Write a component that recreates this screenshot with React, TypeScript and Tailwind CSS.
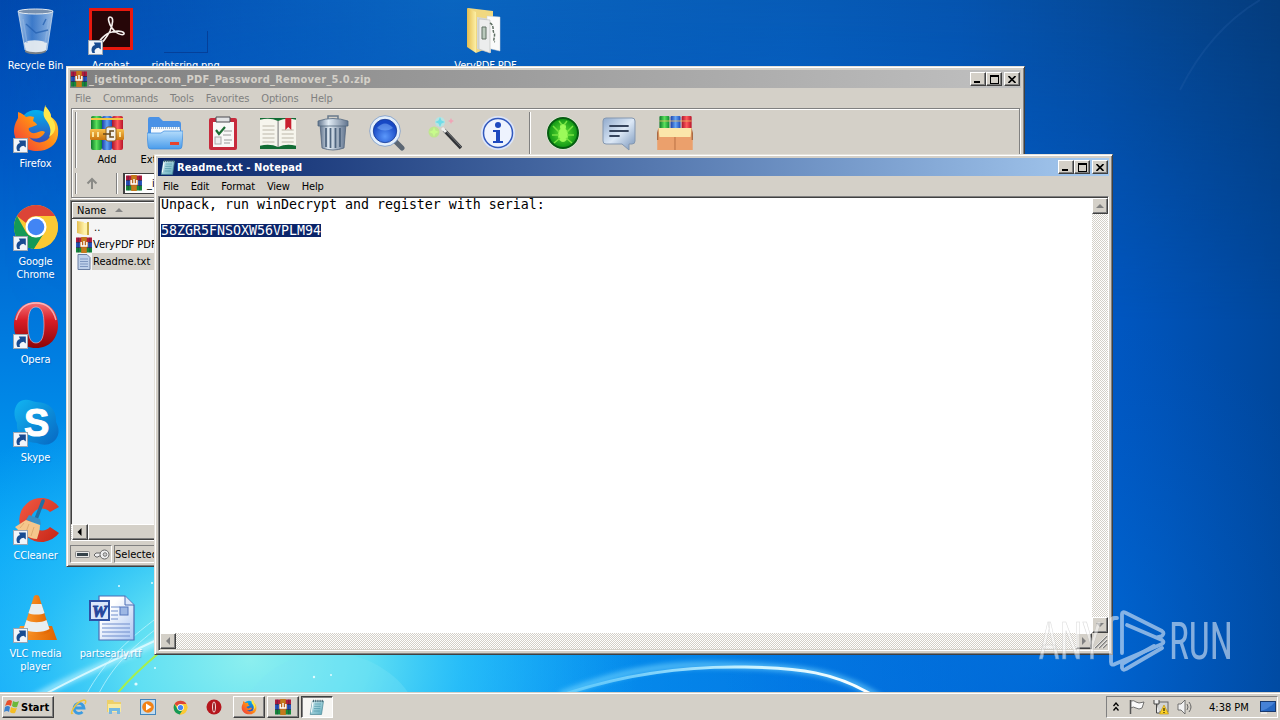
import type { ReactNode } from "react";
import clsx from "clsx";

const ui = "font-['DejaVu_Sans_Condensed','DejaVu_Sans',sans-serif] [font-stretch:condensed]";
const raised =
  "bg-[#d4d0c8] border border-t-white border-l-white border-r-[#404040] border-b-[#404040] shadow-[inset_-1px_-1px_0_#808080]";
const sunken = "border border-t-[#808080] border-l-[#808080] border-r-white border-b-white";
const dither = "bg-[conic-gradient(#fff_25%,#d4d0c8_0_50%,#fff_0_75%,#d4d0c8_0)] bg-[size:2px_2px]";

type IconProps = { className?: string };

// Gradients shared by every icon on the page
function Gradients() {
  return (
    <svg className="absolute size-0" aria-hidden>
      <defs>
        <linearGradient id="red" x1="0" x2="1"><stop offset="0" stopColor="#a8142c" /><stop offset=".5" stopColor="#ff5a5c" /><stop offset="1" stopColor="#b8142a" /></linearGradient>
        <linearGradient id="green" x1="0" x2="1"><stop offset="0" stopColor="#0e7a2a" /><stop offset=".5" stopColor="#5be05c" /><stop offset="1" stopColor="#0d8a30" /></linearGradient>
        <linearGradient id="blue" x1="0" x2="1"><stop offset="0" stopColor="#1c3fa8" /><stop offset=".5" stopColor="#63a4f4" /><stop offset="1" stopColor="#1d4ab8" /></linearGradient>
        <linearGradient id="belt" x1="0" x2="0" y1="0" y2="1"><stop offset="0" stopColor="#f8c04c" /><stop offset="1" stopColor="#c9740e" /></linearGradient>
        <linearGradient id="folderBlue" x1="0" x2="0" y1="0" y2="1"><stop offset="0" stopColor="#b4dcfb" /><stop offset="1" stopColor="#4a9ceb" /></linearGradient>
        <linearGradient id="metal" x1="0" x2="1"><stop offset="0" stopColor="#60738c" /><stop offset=".35" stopColor="#e3edf6" /><stop offset="1" stopColor="#62758f" /></linearGradient>
        <radialGradient id="lens" cx=".5" cy=".7"><stop offset="0" stopColor="#5b98fb" /><stop offset="1" stopColor="#1748c4" /></radialGradient>
        <radialGradient id="bug"><stop offset="0" stopColor="#66e336" /><stop offset="1" stopColor="#0d9414" /></radialGradient>
        <linearGradient id="bubble" x1="0" x2="1" y1="0" y2="1"><stop offset="0" stopColor="#8fa9cc" /><stop offset=".5" stopColor="#dce8f6" /><stop offset="1" stopColor="#7592b8" /></linearGradient>
        <linearGradient id="fox" x1="0" x2="1" y1="1" y2="0"><stop offset="0" stopColor="#f02d42" /><stop offset=".5" stopColor="#ff8b16" /><stop offset="1" stopColor="#ffe63a" /></linearGradient>
        <linearGradient id="foxGlobe" x1="0" x2="0" y1="0" y2="1"><stop offset="0" stopColor="#00b2f0" /><stop offset="1" stopColor="#3846b8" /></linearGradient>
        <linearGradient id="operaRed" x1="0" x2="0" y1="0" y2="1"><stop offset="0" stopColor="#f7757b" /><stop offset=".4" stopColor="#d81d26" /><stop offset="1" stopColor="#8b0508" /></linearGradient>
        <linearGradient id="skype" x1="0" x2="1" y1="0" y2="1"><stop offset="0" stopColor="#11b5f2" /><stop offset="1" stopColor="#0767c2" /></linearGradient>
        <linearGradient id="cc" x1="0" x2="1" y1="0" y2="1"><stop offset="0" stopColor="#f25a43" /><stop offset="1" stopColor="#c62517" /></linearGradient>
        <linearGradient id="glass" x1="0" x2="1"><stop offset="0" stopColor="#d8e9f8" stopOpacity=".75" /><stop offset=".4" stopColor="#6c9edc" stopOpacity=".55" /><stop offset="1" stopColor="#dcebf8" stopOpacity=".7" /></linearGradient>
        <linearGradient id="yellow" x1="0" x2="1"><stop offset="0" stopColor="#e5bd4f" /><stop offset="1" stopColor="#fdf0a6" /></linearGradient>
        <linearGradient id="cone" x1="0" x2="1"><stop offset="0" stopColor="#ff9d2e" /><stop offset="1" stopColor="#e06400" /></linearGradient>
        <linearGradient id="paper" x1="0" x2="1" y1="0" y2="1"><stop offset=".3" stopColor="#fff" /><stop offset="1" stopColor="#a9c4f2" /></linearGradient>
        <linearGradient id="pad" x1="0" x2="1" y1="0" y2="1"><stop offset="0" stopColor="#d8f2f6" /><stop offset="1" stopColor="#5ba7b8" /></linearGradient>
      </defs>
    </svg>
  );
}

function RarIcon({ className }: IconProps) {
  return (
    <svg viewBox="0 0 16 16" className={clsx("shrink-0", className)}>
      <rect width="16" height="5" y=".5" fill="#b21c3c" />
      <rect width="16" height="5" y="5.5" fill="#2a56c0" />
      <rect width="16" height="5" y="10.5" fill="#178a3a" />
      <path d="M0 5.5h16M0 10.5h16" stroke="#1c2350" strokeWidth=".7" />
      <path d="M2.2.5v15M13.8.5v15" stroke="#181a50" strokeWidth=".7" opacity=".6" />
      <rect x="5.2" width="5.6" height="16" fill="#c4791c" />
      <rect x="4" y="4.5" width="8" height="6" rx="1" fill="#b9661e" />
      <path d="M5.2 5v4h5.6V5M8 4v5" fill="none" stroke="#fff" strokeWidth="1.4" />
    </svg>
  );
}

function NotepadIcon({ className }: IconProps) {
  return (
    <svg viewBox="0 0 16 16" className={clsx("shrink-0", className)}>
      <path d="M3.5 2h11l-2 13.5H1.2z" fill="url(#pad)" stroke="#4a8795" strokeWidth=".7" />
      <path d="M4 2.5 2.3 13.5" stroke="#fff" strokeWidth="1" />
      <path d="M5.5 5h6.5M5.2 7.3h6.4M4.9 9.6h6.4M4.6 12h6.2" stroke="#549aab" strokeWidth=".8" />
      <path d="M4.5.8v2.4M6.7.8v2.4M8.9.8v2.4M11.1.8v2.4M13.3.8v2.4" stroke="#3f5a66" strokeWidth=".9" />
    </svg>
  );
}

function FirefoxIcon({ className }: IconProps) {
  return (
    <svg viewBox="0 0 48 48" className={className}>
      <circle cx="24" cy="22" r="17" fill="url(#foxGlobe)" />
      <path d="M33 1c4 5 6 8 6 11 6 4 8 9 7 18-1 10-10 16-21 16S3 39 2 27c0-7 2-10 4-14V7c4 1 6 3 8 5 3-1 5-1 8 0l-1 4c3 2 4 3 4 4l-8 3c-1 2 1 4 3 5 6 1 9-4 13-1-3 7-11 8-16 5 5 7 15 7 20 1 5-7 3-14-2-19-3-4-3-8-1-14z" fill="url(#fox)" />
      <path d="M33 1c-2 7-2 10 1 14 4 5 6 11 3 17 8-5 8-12 2-20 0-3-1-6-6-11z" fill="#ffe74a" />
    </svg>
  );
}

function ChromeIcon({ className }: IconProps) {
  return (
    <svg viewBox="0 0 48 48" className={className}>
      <circle cx="24" cy="24" r="22" fill="#fbc934" />
      <path d="M5 13A22 22 0 0 1 43 13H24a11 11 0 0 0-10 7z" fill="#dc4437" />
      <path d="M5 13a22 22 0 0 0 17 33l10-16a11 11 0 0 1-18-1z" fill="#149957" />
      <path d="M43 13H24a11 11 0 0 1 9 17L22 46a22 22 0 0 0 21-33z" fill="#fbc934" />
      <circle cx="24" cy="24" r="10.5" fill="#fff" />
      <circle cx="24" cy="24" r="8.3" fill="#4285f4" />
    </svg>
  );
}

function OperaIcon({ className }: IconProps) {
  return (
    <svg viewBox="0 0 48 48" className={className}>
      <path fillRule="evenodd" d="M24 1C10 1 2 11 2 24s8 23 22 23 22-10 22-23S38 1 24 1zm0 5c6 0 8 7 8 18s-2 18-8 18-8-7-8-18 2-18 8-18z" fill="url(#operaRed)" />
      <path d="M4 19C7 7 15 2 24 2s17 5 20 17" fill="none" stroke="#ffd5d5" strokeWidth="1.5" opacity=".7" />
      <path d="M24 6c6 0 8 7 8 18s-2 18-8 18-8-7-8-18 2-18 8-18z" fill="none" stroke="#ffc2c2" opacity=".6" />
    </svg>
  );
}

function RecycleIcon() {
  return (
    <svg viewBox="0 0 48 48" className="size-12">
      <path d="M6 4h35l-6 39c-4 4-18 4-22 0z" fill="url(#glass)" stroke="#c4d6ea" strokeWidth=".8" />
      <path d="M12 36c5-4 18-3 23 0l-1 8c-5 3-16 3-20 0z" fill="#edf1f2" opacity=".9" />
      <path d="M11 12l4 24M37 12l-4 24" stroke="#8fb4e2" strokeWidth="1.5" fill="none" opacity=".65" />
      <path d="M14 17l10 9 12-3M34 12l-3 6" stroke="#2460b0" strokeWidth="1.5" fill="none" opacity=".75" />
      <ellipse cx="23.5" cy="4.5" rx="17.5" ry="2.5" fill="#7890ae" stroke="#e4ebf2" />
      <path d="M13 43c5 3 17 3 21 0v2c-6 3-16 3-21 0z" fill="#777f86" />
    </svg>
  );
}

function AcrobatIcon() {
  return (
    <svg viewBox="0 0 48 48" className="size-12">
      <path d="M2 1h44v42H2z" fill="#e8180e" />
      <path d="M5 4h38v36H5z" fill="#260608" />
      <path d="M23 10c4 0 3 7 0 14-3 6-9 14-11 13-2-2 7-11 13-12 8-2 13 0 12 2-2 2-9-1-12-6-3-4-5-11-2-11z" fill="none" stroke="#f6f0ee" strokeWidth="1.6" />
    </svg>
  );
}

function SkypeIcon() {
  return (
    <svg viewBox="0 0 48 48" className="size-12">
      <path d="M6 4C12-2 20 2 24 3c15 0 21 10 20 20 5 9 2 16-3 20-6 4-11 3-16 1C11 44 4 35 5 24 1 16 2 9 6 4z" fill="url(#skype)" />
      <text x="24.500" y="36.500" textAnchor="middle" fontFamily="Liberation Sans, sans-serif" fontWeight="700" fontSize="38" fill="#fff" stroke="#fff">S</text>
    </svg>
  );
}

function CCleanerIcon() {
  return (
    <svg viewBox="0 0 48 48" className="size-12">
      <path d="M47 10A22 22 0 1 0 47 36l-9-6a11 11 0 1 1 0-15z" fill="url(#cc)" />
      <path d="M31 4 24 22" stroke="#2170a4" strokeWidth="3.5" strokeLinecap="round" />
      <path d="M17 18l11 4 1 6-15-5z" fill="#3a8fc4" />
      <path d="M14 23l14 5c0 6-2 10-3 14-8 0-16-6-22-12z" fill="#f5c68b" />
      <path d="M17 27l-3 8M22 30l-3 9M12 26l-4 5" stroke="#dba468" strokeWidth=".8" />
    </svg>
  );
}

function VlcIcon() {
  return (
    <svg viewBox="0 0 48 48" className="size-12">
      <path d="M8 31h32l5 14H3z" fill="url(#cone)" />
      <path d="M22 1q2.500-2 5 0l11 35c-5 6-22 6-27 0z" fill="url(#cone)" />
      <path d="M19.500 9h10l3 9c-3 2-13 2-16 0zM14.500 25c5 3 15 3 20 0l3 9c-6 4-20 4-26 0z" fill="#e9eef0" />
    </svg>
  );
}

function WordIcon() {
  return (
    <svg viewBox="0 0 48 48" className="size-12">
      <path d="M12 1h26l9 9v35H12z" fill="url(#paper)" stroke="#4b6db4" strokeWidth="1.2" />
      <path d="M38 1v9h9" fill="#dbe6fa" stroke="#4b6db4" />
      <path d="M24 12h9M24 16h7M24 20h7M24 24h7M15 29h28M15 33h28M15 37h28M15 41h28" stroke="#6f8dcc" />
      <rect x="33" y="12" width="8" height="8" fill="#9db7e4" stroke="#5577bd" />
      <rect x="3" y="6" width="19" height="19" fill="#dae6fb" stroke="#2d51a4" strokeWidth="2" />
      <text x="12.5" y="21.5" textAnchor="middle" fontFamily="Liberation Serif, serif" fontStyle="italic" fontWeight="700" fontSize="17" fill="#27479c" stroke="#27479c">W</text>
    </svg>
  );
}

function FolderFilesIcon() {
  return (
    <svg viewBox="0 0 48 48" className="size-12">
      <path d="M6 1 31 4v35L14 46z" fill="#f0d880" />
      <path d="M15 10l14 2v34l-14-4z" fill="#d5d7d5" />
      <path d="M25 9l13 1v34l-13-3z" fill="#fafafa" stroke="#cfd3d5" strokeWidth=".5" />
      <path d="M17 12l11 1v33l-11-4z" fill="#eceded" stroke="#b9bcba" strokeWidth=".6" />
      <path d="M20 20h4v12h-4z" fill="#b9c9bc" stroke="#607065" />
      <path d="M28 16c5 3 2 8 4 10s-2 8 1 9" stroke="#607065" fill="none" strokeWidth="1.5" strokeDasharray="3 1" />
      <path d="M5 1l9 4v41l-9-6z" fill="url(#yellow)" />
    </svg>
  );
}

function ShortcutArrow() {
  return (
    <svg viewBox="0 0 15 15" className="absolute bottom-0 left-[1px] size-[15px]">
      <rect x=".5" y=".5" width="14" height="14" fill="#f1f5fa" stroke="#9ba5b2" />
      <path d="M4.500 13C2.500 9.500 3.800 5.800 7 5L5.800 2.500h7v7L10.600 7.800C7.800 8.400 5.800 9.800 7 13z" fill="#184b91" />
    </svg>
  );
}

type Shortcut = { label: string; icon: ReactNode; place: string; arrow?: boolean };

const shortcuts: Shortcut[] = [
  { label: "Recycle Bin", icon: <RecycleIcon />, place: "col-start-1 row-start-1" },
  { label: "Firefox", icon: <FirefoxIcon className="size-12" />, place: "col-start-1 row-start-2", arrow: true },
  { label: "Google Chrome", icon: <ChromeIcon className="size-12" />, place: "col-start-1 row-start-3", arrow: true },
  { label: "Opera", icon: <OperaIcon className="size-12" />, place: "col-start-1 row-start-4", arrow: true },
  { label: "Skype", icon: <SkypeIcon />, place: "col-start-1 row-start-5", arrow: true },
  { label: "CCleaner", icon: <CCleanerIcon />, place: "col-start-1 row-start-6", arrow: true },
  { label: "VLC media player", icon: <VlcIcon />, place: "col-start-1 row-start-7", arrow: true },
  { label: "Acrobat", icon: <AcrobatIcon />, place: "col-start-2 row-start-1", arrow: true },
  { label: "partsearly.rtf", icon: <WordIcon />, place: "col-start-2 row-start-7" },
  {
    label: "rightsring.png",
    icon: <div className="h-[46px] w-[46px] pt-6 pl-[2px]"><div className="h-full border-r border-b border-[#04409a]" /></div>,
    place: "col-start-3 row-start-1",
  },
  { label: "VeryPDF PDF", icon: <FolderFilesIcon />, place: "col-start-7 row-start-1" },
];

function Wallpaper() {
  return (
    <svg viewBox="0 0 1280 720" className="absolute top-0 left-0 h-[720px] w-[1280px]" preserveAspectRatio="none">
      <defs>
        <linearGradient id="sky" x1="0" x2="0" y1="0" y2="1">
          <stop offset="0" stopColor="#0149ae" /><stop offset=".2" stopColor="#0057c3" /><stop offset=".5" stopColor="#007fe2" /><stop offset=".75" stopColor="#00a3f6" /><stop offset="1" stopColor="#0aa0fb" />
        </linearGradient>
        <linearGradient id="dusk" x1="0" x2="1">
          <stop offset=".35" stopColor="#0059c8" stopOpacity="0" /><stop offset=".62" stopColor="#0069dc" stopOpacity=".7" /><stop offset=".86" stopColor="#0058c4" /><stop offset="1" stopColor="#00479c" />
        </linearGradient>
        <radialGradient id="glow" gradientUnits="userSpaceOnUse" cx="250" cy="660" r="390" gradientTransform="translate(0 198) scale(1 .7)">
          <stop offset="0" stopColor="#8cefef" /><stop offset=".3" stopColor="#5fdff3" /><stop offset=".55" stopColor="#33c8f8" stopOpacity=".7" /><stop offset="1" stopColor="#22b4fa" stopOpacity="0" />
        </radialGradient>
        <radialGradient id="beam" gradientUnits="userSpaceOnUse" cx="1050" cy="640" r="330">
          <stop offset="0" stopColor="#0088f4" stopOpacity=".8" /><stop offset="1" stopColor="#0060d4" stopOpacity="0" />
        </radialGradient>
        <linearGradient id="topShade" x1="0" x2="1">
          <stop offset="0" stopColor="#0a70d0" stopOpacity="0" /><stop offset=".35" stopColor="#0c6cc4" stopOpacity=".8" /><stop offset=".75" stopColor="#0652a8" stopOpacity=".8" /><stop offset="1" stopColor="#043c7c" />
        </linearGradient>
        <linearGradient id="fade" x1="0" x2="0" y1="0" y2="1"><stop offset="0" stopColor="#fff" /><stop offset="1" stopColor="#000" /></linearGradient>
        <mask id="topMask"><rect width="1280" height="320" fill="url(#fade)" /></mask>
        <linearGradient id="arc" x1="0" x2="1"><stop offset="0" stopColor="#7fdcff" stopOpacity=".5" /><stop offset=".6" stopColor="#c8f2ff" /><stop offset="1" stopColor="#fff" /></linearGradient>
        <filter id="soft" x="-20%" y="-50%" width="140%" height="200%"><feGaussianBlur stdDeviation="2.5" /></filter>
      </defs>
      <rect width="1280" height="720" fill="url(#sky)" />
      <rect width="1280" height="720" fill="url(#dusk)" />
      <rect width="1280" height="720" fill="url(#beam)" opacity=".45" />
      <rect width="1280" height="320" fill="url(#topShade)" mask="url(#topMask)" />
      <rect width="1280" height="720" fill="url(#glow)" />
      <path d="M245 700c20-34 55-48 85-48s70 20 82 48z" fill="#7fe4f6" opacity=".3" />
      <path d="M30 700C80 672 115 662 165 638" stroke="#baf3ff" strokeWidth="7" fill="none" filter="url(#soft)" opacity=".7" />
      <path d="M38 698C85 672 115 660 165 636" stroke="#e2fbff" strokeWidth="2" fill="none" opacity=".85" />
      <path d="M86 695C105 660 130 637 165 612M98 695C115 662 135 645 165 622" stroke="#c6f6ff" fill="none" opacity=".7" />
      <path d="M116 695C128 680 142 667 160 652" stroke="#a6f04c" strokeWidth="2" fill="none" />
      <path d="M560 695C640 662 690 664 748 666S845 675 880 698" stroke="#78d8ff" strokeWidth="7" fill="none" filter="url(#soft)" opacity=".6" />
      <path d="M562 695C630 672 690 666 745 667S835 672 874 696" stroke="url(#arc)" strokeWidth="3" fill="none" />
      <path d="M1180 90Q1210 30 1260 0" stroke="#2a62aa" strokeWidth="2" fill="none" opacity=".25" />
      <g fill="#e0fbff"><circle cx="119" cy="586" r="1" /><circle cx="152" cy="583" r="1" /><circle cx="136" cy="684" r="1.6" /><circle cx="155" cy="668" r="1" /><circle cx="314" cy="677" r="1.2" /><circle cx="331" cy="675" r="1" /></g>
    </svg>
  );
}

function CaptionButtons() {
  return (
    <div className="flex h-[14px]">
      <span className={clsx(raised, "flex w-4 items-end pb-[2px] pl-[3px]")}><i className="h-[2px] w-[6px] bg-black" /></span>
      <span className={clsx(raised, "flex w-4 items-center justify-center")}><i className="h-[9px] w-[9px] border border-t-2 border-black" /></span>
      <span className={clsx(raised, "ml-[2px] flex w-4 items-center justify-center")}>
        <svg viewBox="0 0 8 7" className="h-[7px] w-2"><path d="M.5 0 7.5 7M7.5 0 .5 7" stroke="#000" strokeWidth="1.6" /></svg>
      </span>
    </div>
  );
}

function ScrollButton({ d, className }: { d: string; className?: string }) {
  return (
    <span className={clsx(raised, "flex size-4 shrink-0 items-center justify-center", className)}>
      <svg viewBox="0 0 8 8" className="size-2"><path d={d} fill="currentColor" /></svg>
    </span>
  );
}

function Frame({ className, children }: { className: string; children: ReactNode }) {
  return (
    <section className={clsx("absolute flex h-[501px] w-[959px] flex-col border border-t-[#e4e1da] border-l-[#e4e1da] border-r-[#404040] border-b-[#404040] bg-[#d4d0c8] p-[3px] shadow-[inset_1px_1px_0_#fff,inset_-1px_-1px_0_#808080]", className)}>
      {children}
    </section>
  );
}

const toolbar: { w: string; label?: string; icon: ReactNode }[] = [
  {
    w: "w-[58px]", label: "Add",
    icon: <><rect x="2" y="1" width="11" height="34" rx="2" fill="url(#green)" /><rect x="13" y="1" width="10" height="34" rx="2" fill="url(#blue)" /><rect x="23" y="1" width="11" height="34" rx="2" fill="url(#red)" /><path d="M2 4h32" stroke="#f1c545" strokeWidth="2" /><rect x="1" y="14" width="34" height="11" rx="1.5" fill="url(#belt)" /><rect x="17" y="12" width="10" height="14" rx="2" fill="#f3f1ea" stroke="#94651a" /><path d="M25 16h-4v6h4M22 19h-8" stroke="#6a4a1d" strokeWidth="1.500" fill="none" /><path d="M4 17v5M9 17v5M31 17v5" stroke="#fbe59e" strokeWidth="2" /></>,
  },
  {
    w: "w-[58px]", label: "Extract To",
    icon: <><path d="M1 4q0-2 2-2h9l4 4h15q3 0 3 3v20H1z" fill="#4a92e6" /><path d="M4 12h29v10H4z" fill="#f4f9fe" /><path d="M4 13h29" stroke="#a8bfd6" strokeDasharray="1 1" strokeWidth="2" /><path d="M0 18h14l3-2h19l-1 15q0 3-3 3H4q-3 0-3-3z" fill="url(#folderBlue)" stroke="#3a8ade" strokeWidth=".7" /><rect x="23" y="27" width="9" height="3" fill="#e8422e" /></>,
  },
  {
    w: "w-[57px]",
    icon: <><rect x="4" y="3" width="28" height="32" rx="2" fill="#c72a3c" /><rect x="8" y="7" width="21" height="25" fill="#f8f8f7" /><path d="M11 2h14v5H11z" fill="#e2e3e4" stroke="#4b4b50" /><path d="m11 15 3 4 6-7" stroke="#1d6e34" strokeWidth="2.2" fill="none" /><rect x="10" y="22" width="6" height="7" fill="#eee" stroke="#aaa" /><path d="M19 16h8M18 20h8M19 25h8M19 28h6" stroke="#9a9a9a" /></>,
  },
  {
    w: "w-[54px]",
    icon: <g transform="translate(-3.500 0) scale(1.200 1)"><path d="M0 3h36v31H0z" fill="#116c34" /><path d="M2 5q9-3 16 1 7-4 16-1v26q-9-3-16 1-7-4-16-1z" fill="#f6f5ed" /><path d="M18 6v26" stroke="#888" /><path d="M5 11h10M5 15h10M5 19h10M5 23h10M5 27h10M21 15h10M21 19h10M21 23h10M21 27h10" stroke="#bbb8aa" /><path d="M24 3h5v12l-2.500-3-2.500 3z" fill="#c92030" /></g>,
  },
  {
    w: "w-[55px]",
    icon: <><path d="M5 9h26l-2 24q-11 4-22 0z" fill="url(#metal)" stroke="#53657c" strokeWidth=".8" /><path d="M11 13v19M15.500 13v20M20.500 13v20M25 13v19" stroke="#506680" strokeWidth="1.800" /><path d="M3 6q15-5 30 0v5H3z" fill="url(#metal)" stroke="#52677f" strokeWidth=".8" /><path d="M13 4V1h10v3" fill="none" stroke="#68798c" strokeWidth="1.5" /></>,
  },
  {
    w: "w-[54px]",
    icon: <><path d="m26 26 7 7" stroke="#5b6673" strokeWidth="5" strokeLinecap="round" /><circle cx="16" cy="16" r="13.500" fill="url(#lens)" stroke="#e4effb" strokeWidth="3.500" /><circle cx="16" cy="16" r="15.300" fill="none" stroke="#6a8fc4" strokeWidth=".7" /><circle cx="16" cy="16" r="11.700" fill="none" stroke="#173a94" strokeWidth=".8" /><path d="M8 13q8-9 16 0-8 5-16 0z" fill="#8bbcff" opacity=".45" /></>,
  },
  {
    w: "w-[59px]",
    icon: <g transform="translate(1 0)"><path d="m17 15 17 18" stroke="#303236" strokeWidth="3.500" /><path d="m19 16 15 16" stroke="#83868a" strokeWidth=".8" /><path d="m15 13 4 4" stroke="#efefed" strokeWidth="3" /><circle cx="7" cy="17" r="5.500" fill="#b6ee76" opacity=".7" /><path d="m7 12 1.500 3.500L12 17l-3.500 1.500L7 22l-1.500-3.500L2 17l3.500-1.500z" fill="#c8fb8c" /><circle cx="13" cy="7" r="5" fill="#a9ecee" opacity=".7" /><path d="m13 2 1.500 3.500L18 7l-3.500 1.500L13 12l-1.500-3.500L8 7l3.500-1.500z" fill="#6fdce8" /><path d="m24 3 1 2 2 1-2 1-1 2-1-2-2-1 2-1z" fill="#f0a5b6" /></g>,
  },
  {
    w: "w-[50px]",
    icon: <><circle cx="18" cy="18" r="17" fill="#dbe4f8" /><circle cx="18" cy="18" r="14.500" fill="#eef3fe" stroke="#3158bd" strokeWidth="1.500" /><circle cx="18" cy="10" r="3" fill="#1e49bf" /><path d="M13 15h7v11h3v2H13v-2h3v-9h-3z" fill="#1e49bf" /></>,
  },
  {
    w: "w-[51px]",
    icon: <><circle cx="18" cy="18" r="16.500" fill="#e6f2df" /><circle cx="18" cy="18" r="15" fill="url(#bug)" stroke="#075c12" strokeWidth="2" /><ellipse cx="18" cy="20" rx="5" ry="7" fill="#9bfa5a" /><circle cx="18" cy="12" r="3" fill="#9bfa5a" /><path d="M8 11l6 6M28 11l-6 6M7 20h7M22 20h7M9 28l6-5M27 28l-6-5M14 6l3 4M22 6l-3 4" stroke="#76e342" strokeWidth="1.500" /></>,
  },
  {
    w: "w-[62px]",
    icon: <><path d="M5 3h26q3 0 3 3v20q0 3-3 3h-3v6l-7-6H5q-3 0-3-3V6q0-3 3-3z" fill="url(#bubble)" stroke="#8497b0" /><path d="M9 11h18M9 16h18M9 21h9" stroke="#36445c" strokeWidth="1.800" strokeLinecap="round" /></>,
  },
  {
    w: "w-[50px]",
    icon: <g transform="translate(-2 0) scale(1.110 1)"><rect x="4" y="1" width="9" height="14" rx="1" fill="url(#green)" /><rect x="14" y="1" width="9" height="14" rx="1" fill="url(#blue)" /><rect x="24" y="1" width="9" height="14" rx="1" fill="url(#red)" /><path d="M4 6h29" stroke="#f0c060" opacity=".8" /><path d="M3 13h30l1 10v12H2V23z" fill="#eba06c" /><path d="M3 13h30l-1 9H4z" fill="#fbe6aa" /><path d="M3 13 0 25h3zM33 13l3 12h-3z" fill="#a96a42" /><path d="M18 22v13" stroke="#bd7548" /></g>,
  },
];

function Grip({ className }: IconProps) {
  return <span className={clsx("w-[2px] shrink-0 border-l border-l-[#808080] bg-white", className)} />;
}

function WinRar() {
  return (
    <Frame className="top-[66px] left-[66px]">
      <header className="flex h-[18px] shrink-0 items-center bg-linear-to-r from-[#808080] to-[#c0c0c0] px-[1px]">
        <RarIcon className="size-4" />
        <span className="ml-[2px] flex-1 font-bold tracking-[0.25px] text-[#d4d0c8]">_igetintopc.com_PDF_Password_Remover_5.0.zip</span>
        <CaptionButtons />
      </header>
      <nav className="flex h-5 shrink-0 items-center gap-3 pl-[5px] tracking-[-0.12px] text-[#808080]">
        {["File", "Commands", "Tools", "Favorites", "Options", "Help"].map((m) => <span key={m}>{m}</span>)}
      </nav>
      <div className="mx-[1px] flex h-[90px] shrink-0 flex-col border border-[#808080] shadow-[inset_1px_1px_0_#fff,1px_1px_0_#fff]">
        <div className="flex h-[61px] pt-[3px] pl-[3px]">
          <Grip className="mr-[1px] h-[56px]" />
          {toolbar.map((t, i) => (
            <div key={i} className="flex shrink-0">
              {i === 8 && <Grip className="mr-[6px] ml-[6px] h-[54px]" />}
              <div className={clsx("flex flex-col items-center pt-[3px]", t.w)}>
                <svg viewBox="0 0 36 36" className="size-9">{t.icon}</svg>
                <span className="mt-[2px] whitespace-nowrap">{t.label}</span>
              </div>
            </div>
          ))}
        </div>
        <div className="flex h-[26px] items-center pl-[3px]">
          <Grip className="h-[21px]" />
          <svg viewBox="0 0 12 12" className="mx-[9px] size-3"><path d="M6 12V2M1.500 6.500 6 2l4.500 4.500" stroke="#8a8a86" strokeWidth="2" fill="none" /></svg>
          <Grip className="ml-[9px] h-[21px]" />
          <div className="ml-[5px] flex h-[21px] flex-1 items-center border border-[#404040] border-l-2 bg-white pl-[1px] text-black">
            <RarIcon className="size-4" /><span className="ml-[5px]">_i</span>
          </div>
        </div>
      </div>
      <div className="mt-[2px] flex h-[341px] shrink-0 flex-col border border-t-[#808080] border-l-[#808080] border-r-white border-b-white bg-[#f5f5f5] shadow-[inset_1px_1px_0_#404040]">
        <div className="mt-[1px] ml-[1px] flex h-[17px] items-center border-b border-[#404040] bg-[#d4d0c8] pl-[5px] shadow-[inset_1px_1px_0_#fff,inset_0_-1px_0_#808080]">
          Name
          <svg viewBox="0 0 8 4" className="ml-[9px] h-1 w-2"><path d="M0 4 4 0l4 4z" fill="#858585" /></svg>
        </div>
        <ul className="flex-1 pl-[5px]">
          <li className="flex h-[17px] items-center">
            <svg viewBox="0 0 16 16" className="mr-[2px] size-4"><path d="M1 1l7 1v13l-7-2z" fill="url(#yellow)" /><path d="M8 3h4v12H8z" fill="#fff2a8" /><path d="M11 2h2v13h-2z" fill="#c9ad48" /></svg>..
          </li>
          <li className="flex h-[17px] items-center"><RarIcon className="mr-[1px] size-4" />VeryPDF PDF</li>
          <li className="flex h-[17px] items-center">
            <svg viewBox="0 0 16 16" className="size-4"><path d="M2 .5h9l3 3v12H2z" fill="#bed0ea" stroke="#6a7fa3" /><path d="M4 5h8M4 7.500h8M4 10h8M4 12.500h8" stroke="#7e97c0" /></svg>
            <span className="h-full w-[300px] bg-[#d4d0c8] pl-[1px] leading-[17px]">Readme.txt</span>
          </li>
        </ul>
        <div className={clsx("flex h-4 pl-[1px]", dither)}><ScrollButton d="M5.500 0v8l-4-4z" /><span className={clsx(raised, "flex-1")} /></div>
      </div>
      <footer className="mt-1 flex h-[18px] shrink-0 gap-[2px]">
        <div className={clsx(sunken, "flex w-[42px] items-center gap-[3px] pl-1")}>
          <svg viewBox="0 0 15 7" className="h-[7px] w-[15px]"><rect x=".5" y=".5" width="14" height="6" rx="1" fill="#e8e8e8" stroke="#888" /><rect x="2" y="2" width="11" height="3" fill="#35424a" /></svg>
          <svg viewBox="0 0 17 11" className="h-[11px] w-[17px]"><path d="M8 4H3L1 6l2 2h2l1-1h3" fill="#eee" stroke="#666" /><circle cx="11.500" cy="5.500" r="4.500" fill="#eee" stroke="#666" /><circle cx="12" cy="5.500" r="1.800" fill="#ccc" stroke="#777" /></svg>
        </div>
        <div className={clsx(sunken, "flex flex-1 items-center")}>Selected</div>
      </footer>
    </Frame>
  );
}

function Notepad() {
  return (
    <Frame className="top-[154px] left-[154px]">
      <header className="flex h-[18px] shrink-0 items-center bg-linear-to-r from-[#0a246a] to-[#a6caf0] px-[1px]">
        <NotepadIcon className="ml-[1px] size-4" />
        <span className="ml-[1px] flex-1 font-bold tracking-[0.1px] text-white">Readme.txt - Notepad</span>
        <CaptionButtons />
      </header>
      <nav className="flex h-5 shrink-0 items-center gap-3 pl-[5px] tracking-[-0.18px] text-black">
        {["File", "Edit", "Format", "View", "Help"].map((m) => <span key={m}>{m}</span>)}
      </nav>
      <div className="flex flex-1 flex-col border border-t-[#808080] border-l-[#808080] border-r-white border-b-white bg-white pt-[1px] pb-[1px] pl-[1px] shadow-[inset_1px_1px_0_#404040,inset_0_-1px_0_#d4d0c8]">
        <div className="flex flex-1">
          <div className="flex-1 pl-[1px] font-['DejaVu_Sans_Mono',monospace] text-[13.29px] leading-[13px] whitespace-pre text-black [font-stretch:normal]">
            <p>Unpack, run winDecrypt and register with serial:</p>
            <p className="mt-[13px]"><span className="inline-block h-[13px] bg-[#0a246a] text-white">58ZGR5FNSOXW56VPLM94</span></p>
          </div>
          <div className={clsx("flex w-4 flex-col justify-between", dither)}>
            <ScrollButton d="M0 6h8L4 2z" className="text-[#808080]" />
            <ScrollButton d="M0 2h8L4 6z" className="text-[#808080]" />
          </div>
        </div>
        <div className="flex h-4">
          <div className={clsx("flex flex-1 justify-between", dither)}>
            <ScrollButton d="M6 0v8L2 4z" className="text-[#808080]" />
            <ScrollButton d="M2 0v8l4-4z" className="text-[#808080]" />
          </div>
          <svg viewBox="0 0 16 16" className="size-4 bg-[#d4d0c8]"><path d="M3 15 15 3M7 15l8-8M11 15l4-4" stroke="#808080" strokeWidth="1.500" /><path d="M2 15 15 2M6 15l9-9M10 15l5-5" stroke="#fff" strokeWidth=".7" /></svg>
        </div>
      </div>
    </Frame>
  );
}

function Watermark() {
  return (
    <svg viewBox="0 0 220 68" className="absolute top-[608px] left-[1036px] h-[68px] w-[220px]">
      <g fill="#fff" fontFamily="Roboto, sans-serif" fontSize="51.500" opacity=".52">
        <text x="2.500" y="51" textLength="63" lengthAdjust="spacingAndGlyphs" stroke="#b8b8b8" strokeWidth=".7">ANY</text>
        <text x="133" y="51" textLength="64" lengthAdjust="spacingAndGlyphs">RUN</text>
      </g>
      <g fill="none" stroke="#fff" strokeWidth="3.800" strokeLinejoin="round" strokeLinecap="round" opacity=".52">
        <path d="M81 10h-2q-4 0-4 4v40q0 4 4 2l47-20q3-2 0-4L91 17" />
        <path d="M118 38 86 56v4q1 3 4 1l36-21" />
        <path d="M86 45V6q0-3 4-1l36 18q3 2 0 5l-4 1" />
      </g>
    </svg>
  );
}

function Taskbar() {
  return (
    <footer className="relative flex h-7 shrink-0 items-center bg-[#d4d0c8] pt-1 pr-[2px] pb-[2px] pl-[2px] text-black shadow-[inset_0_1px_0_#d4d0c8,inset_0_2px_0_#fff]">
      <button className={clsx(raised, "flex h-[22px] w-[52px] items-center pl-[1px] font-bold")}>
        <svg viewBox="0 0 16 16" className="mr-[1px] size-4 shrink-0"><path d="M3 2q3-2 5 0L7 7Q4 5 1 7z" fill="#e8502c" /><path d="M9 2q3 2 6 0l-2 6Q10 9 8 7z" fill="#6bb83a" /><path d="M1 8q3-2 5 0l-1 5Q3 11 0 13z" fill="#3b82cf" /><path d="M7 8q3 2 6 1l-2 5Q8 15 6 13z" fill="#f4bd24" /></svg>
        Start
      </button>
      <div className="ml-4 flex w-[152px] items-center justify-between">
        <svg viewBox="0 0 18 18" className="size-[18px]"><path d="M4.500 10h9.500a5 5 0 1 0-1.500 4" fill="none" stroke="#3b9be0" strokeWidth="2.800" /><path d="M3 15Q0 17 3 11 8 3 14 2q3 0 1 4" fill="none" stroke="#efc43c" strokeWidth="1.500" /></svg>
        <svg viewBox="0 0 16 16" className="size-4"><path d="M1 1h6l1 2h7v10H1z" fill="#edd069" /><path d="M2 5h13v8H2z" fill="#f9eaa0" /><path d="M3 9h11v6h-3v-3H6v3H3z" fill="#74b8e0" /></svg>
        <svg viewBox="0 0 16 16" className="size-4"><rect x=".5" y=".5" width="15" height="15" fill="#c3dcef" stroke="#4185bd" /><circle cx="8" cy="8" r="5.800" fill="#f28216" /><path d="M6 4.500v7L11.500 8z" fill="#fff" /></svg>
        <ChromeIcon className="size-[15px]" />
        <svg viewBox="0 0 16 16" className="size-4"><circle cx="8" cy="8" r="7.500" fill="#b5161d" /><ellipse cx="8" cy="8" rx="2" ry="5.500" fill="#f7d8d8" /><ellipse cx="8" cy="8" rx=".9" ry="4.500" fill="#8b151a" /></svg>
      </div>
      <div className="ml-[11px] flex gap-[2px]">
        <button className={clsx(raised, "flex h-[22px] w-8 items-center justify-center")}><FirefoxIcon className="size-4" /></button>
        <button className={clsx(raised, "flex h-[22px] w-8 items-center justify-center")}><RarIcon className="size-4" /></button>
        <button className="flex h-[22px] w-8 items-center justify-center border border-t-[#404040] border-r-white border-b-white border-l-[#404040] bg-[#f6f5f2] shadow-[inset_1px_1px_0_#808080]"><NotepadIcon className="size-4" /></button>
      </div>
      <div className={clsx(sunken, "ml-auto flex h-[22px] w-[172px] items-center pl-[6px]")}>
        <svg viewBox="0 0 6 10" className="h-[10px] w-[6px]"><path d="m.5 4 2.500-3 2.500 3M.5 8.500 3 5.500l2.500 3" fill="none" stroke="#000" strokeWidth="1.300" /></svg>
        <svg viewBox="0 0 16 16" className="ml-[10px] size-4"><path d="M1.500 1v14" stroke="#555" strokeWidth="1.500" /><path d="M2 2q3-1 5 1t8 0l-2 6q-3 2-6 0t-5 0z" fill="#fafafa" stroke="#555" strokeWidth=".8" /></svg>
        <svg viewBox="0 0 16 16" className="ml-[8px] size-4"><rect x="4" y="3" width="11" height="10" fill="#d3d4d2" stroke="#666" /><path d="M1 1v4h5V1M3.500 5v9h3" fill="#eee" stroke="#444" /><path d="m11 6 4.500 9h-9z" fill="#fdd228" stroke="#b88c00" strokeWidth=".6" /><path d="M11 9v3M11 13v1" stroke="#000" /></svg>
        <svg viewBox="0 0 16 16" className="ml-[8px] size-4"><path d="M1 5h3l4-4v14l-4-4H1z" fill="#f2f2f2" stroke="#555" strokeWidth=".8" /><path d="M10 5q2 3 0 6M12 3q4 5 0 10" fill="none" stroke="#666" /></svg>
        <span className="ml-4 whitespace-nowrap">4:38 PM</span>
        <svg viewBox="0 0 16 14" className="mr-[1px] ml-auto h-[14px] w-4"><rect x=".5" y="1.500" width="15" height="10" fill="#2466c0" stroke="#17396e" /><path d="M1 11Q9 9 15 2H1z" fill="#568fe0" opacity=".7" /><path d="M1 13h6" stroke="#fff" /></svg>
      </div>
    </footer>
  );
}

export default function App() {
  return (
    <div className={clsx("relative flex h-[720px] w-[1280px] flex-col overflow-hidden text-[11px] leading-[13px] text-black", ui)}>
      <Gradients />
      <main className="relative flex-1 overflow-hidden">
        <Wallpaper />
        <div className="relative ml-[-2px] grid auto-rows-[98px] grid-cols-[repeat(7,75px)] pt-[7px] tracking-[-0.12px] text-white">
          {shortcuts.map((s) => (
            <div key={s.label} className={clsx("flex flex-col items-center", s.place)}>
              <div className="relative size-12">
                {s.icon}
                {s.arrow && <ShortcutArrow />}
              </div>
              <span className="mt-1 w-[68px] text-center [text-shadow:1px_1px_1px_#0048a060]">{s.label}</span>
            </div>
          ))}
        </div>
        <WinRar />
        <Notepad />
        <Watermark />
      </main>
      <Taskbar />
    </div>
  );
}
